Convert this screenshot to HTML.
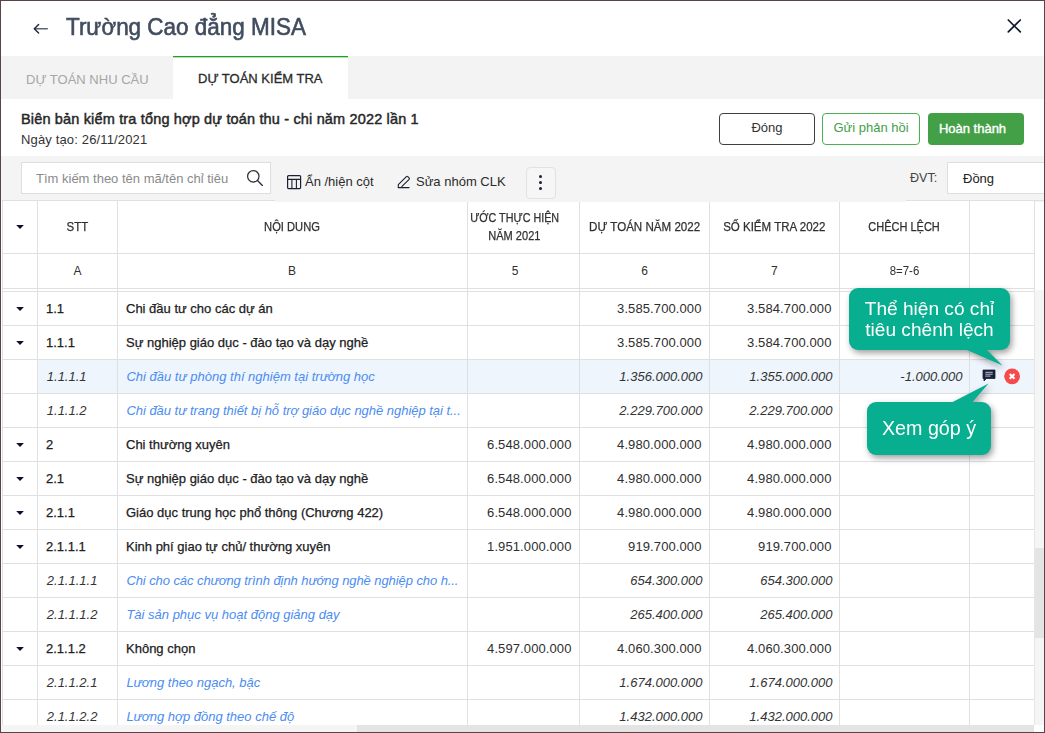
<!DOCTYPE html><html><head><meta charset="utf-8"><style>
*{box-sizing:border-box;margin:0;padding:0}
html,body{width:1045px;height:733px;overflow:hidden;background:#fff}
body{position:relative;font-family:"Liberation Sans",sans-serif;color:#212121}
.a{position:absolute}
.frame{left:0;top:0;width:1045px;height:733px;border:1px solid #5a4546;z-index:50;pointer-events:none}
.title{left:66px;top:14px;font-size:23.6px;color:#404c5f;white-space:nowrap;-webkit-text-stroke:0.6px #404c5f;transform-origin:0 0;transform:scaleX(0.952)}
.tabs{left:1px;top:56px;width:1043px;height:43px;background:#f3f3f3}
.tab1{left:26px;top:71.5px;font-size:13px;color:#a6a6a6;white-space:nowrap}
.tab2{left:173px;top:56px;width:175px;height:43px;background:#fff;border-top:1px solid #1ea21e;box-shadow:inset 0 0.5px 0 #6cc46c}
.tab2 span{position:absolute;left:25px;top:13.5px;font-size:13px;color:#2a2a2a;white-space:nowrap;-webkit-text-stroke:0.3px #2a2a2a}
.h1{left:21px;top:110.5px;font-size:14.5px;color:#262626;white-space:nowrap;letter-spacing:0.16px;-webkit-text-stroke:0.45px #262626}
.h2{left:21px;top:132px;font-size:13px;color:#333;white-space:nowrap;letter-spacing:0.15px}
.btn{top:113px;height:32px;border-radius:4px;font-size:13px;display:flex;align-items:center;justify-content:center;white-space:nowrap;padding-bottom:3px}
.b1{left:719px;width:96px;border:1px solid #3f3f3f;color:#333}
.b2{left:822px;width:98px;border:1px solid #4caf50;color:#43a047}
.b3{left:928px;width:96px;background:#43a047;color:#fff;font-size:13px;-webkit-text-stroke:0.4px #fff;padding-right:7px;padding-bottom:2px}
.tool{left:1px;top:156px;width:1043px;height:46px;background:#f4f4f4}
.search{left:21px;top:162px;width:250px;height:32px;background:#fff;border:1px solid #dedede}
.search span{position:absolute;left:14px;top:8px;font-size:13px;color:#8a8a8a;white-space:nowrap}
.t1{left:305px;top:174px;font-size:13px;color:#2b2b2b;white-space:nowrap}
.t2{left:416px;top:174px;font-size:13px;color:#2b2b2b;white-space:nowrap}
.kebab{left:526px;top:167px;width:30px;height:32px;border:1px solid #e2e2e2;border-radius:4px;background:#f6f6f6}
.dvt{left:910px;top:171px;font-size:12.6px;color:#444;white-space:nowrap}
.sel{left:947px;top:162px;width:100px;height:32px;background:#fff;border:1px solid #dedede}
.sel span{position:absolute;left:15px;top:8px;font-size:13px;color:#222;white-space:nowrap}
.grid{left:2px;top:200px;width:1033px;height:533px;background:#fff}
.hl{background:#fff;}
.vl{position:absolute;top:0;width:1px;background:#e0e0e0}
.hline{position:absolute;height:1px;background:#e0e0e0}
.th{position:absolute;font-size:11.6px;color:#333;text-align:center;display:flex;align-items:center;justify-content:center;line-height:18px;-webkit-text-stroke:0.2px #333}
.cell{position:absolute;font-size:13px;white-space:nowrap;display:flex;align-items:center;height:33px}
.b{color:#212121;-webkit-text-stroke:0.25px #212121}
.i{font-style:italic;color:#333}
.nb{color:#2e2e2e;letter-spacing:0.1px}
.blue{font-style:italic;color:#4a8cf2}
.num{justify-content:flex-end}
.tri{position:absolute;width:0;height:0;border-left:4px solid transparent;border-right:4px solid transparent;border-top:5px solid #1b1f33}
.hscroll{left:1px;top:725px;width:1033px;height:7px;background:#f5f5f5}
.hthumb{left:357px;top:725px;width:677px;height:7px;background:#e4e4e4}
.vscroll{left:1034px;top:290px;width:10px;height:435px;background:#f5f5f5;border-left:1px solid #e6e6e6}
.vthumb{left:1035px;top:548px;width:9px;height:90px;background:#e4e4e4}
.corner{left:1034px;top:725px;width:10px;height:7px;background:#fff}
.callout{position:absolute;background:#07ae90;color:#fff;border-radius:9px;text-align:center;white-space:nowrap}
</style></head><body>
<svg class="a" style="left:30px;top:20px" width="20" height="18" viewBox="0 0 20 18"><path d="M4.5 8.8H17.3" stroke="#5d6478" stroke-width="1.4" fill="none" stroke-linecap="round"/><path d="M8.6 4.6L4.3 8.8L8.6 13.1" stroke="#1d2540" stroke-width="1.4" fill="none" stroke-linecap="round" stroke-linejoin="round"/></svg>
<div class="a title">Trường Cao đẳng MISA</div>
<svg class="a" style="left:1005px;top:17px" width="18" height="18" viewBox="0 0 18 18"><path d="M3.3 3L15.3 14.9M15.3 3L3.3 14.9" stroke="#101633" stroke-width="1.7" fill="none" stroke-linecap="round"/></svg>
<div class="a tabs"></div>
<div class="a tab1">DỰ TOÁN NHU CẦU</div>
<div class="a tab2"><span>DỰ TOÁN KIỂM TRA</span></div>
<div class="a h1">Biên bản kiểm tra tổng hợp dự toán thu - chi năm 2022 lần 1</div>
<div class="a h2">Ngày tạo: 26/11/2021</div>
<div class="a btn b1">Đóng</div>
<div class="a btn b2">Gửi phản hồi</div>
<div class="a btn b3">Hoàn thành</div>
<div class="a tool"></div>
<div class="a search"><span>Tìm kiếm theo tên mã/tên chỉ tiêu</span></div>
<svg class="a" style="left:245px;top:168px" width="20" height="20" viewBox="0 0 20 20"><circle cx="8.3" cy="8.3" r="5.7" stroke="#2b2f3a" stroke-width="1.25" fill="none"/><path d="M12.5 12.5L17.4 17.4" stroke="#2b2f3a" stroke-width="1.35" stroke-linecap="round"/></svg>
<svg class="a" style="left:286px;top:174px" width="16" height="16" viewBox="0 0 16 16"><rect x="1.6" y="1.6" width="13" height="13" rx="1" stroke="#1b1f33" stroke-width="1.2" fill="none"/><path d="M1.6 5.4H14.6M5.9 5.4V14.6M10.4 5.4V14.6" stroke="#1b1f33" stroke-width="1.1"/></svg>
<div class="a t1">Ẩn /hiện cột</div>
<svg class="a" style="left:393px;top:172px" width="22" height="20" viewBox="0 0 22 20"><path d="M5.3 15.5V12.7L13.4 4.6Q14.1 3.9 14.8 4.6L16.1 5.9Q16.8 6.6 16.1 7.3L8.5 14.9" stroke="#1b1f33" stroke-width="1.1" fill="none" stroke-linejoin="round"/><path d="M5.3 15.6H16" stroke="#1b1f33" stroke-width="1.2" stroke-linecap="round"/></svg>
<div class="a t2">Sửa nhóm CLK</div>
<div class="a kebab"></div>
<div class="a" style="left:538.6px;top:175.0px;width:3.2px;height:3.2px;border-radius:50%;background:#1b1f33"></div>
<div class="a" style="left:538.6px;top:180.6px;width:3.2px;height:3.2px;border-radius:50%;background:#1b1f33"></div>
<div class="a" style="left:538.6px;top:187.0px;width:3.2px;height:3.2px;border-radius:50%;background:#1b1f33"></div>
<div class="a dvt">ĐVT:</div>
<div class="a sel"><span>Đồng</span></div>
<div class="a grid"></div>
<div class="a hline" style="left:2px;top:200px;width:273px"></div>
<div class="a hline" style="left:906px;top:200px;width:138px"></div>
<div class="a hline" style="left:2px;top:253px;width:1032px"></div>
<div class="a hline" style="left:2px;top:288px;width:1032px"></div>
<div class="a hline" style="left:2px;top:291px;width:1032px"></div>
<div class="a hline" style="left:2px;top:325px;width:1032px"></div>
<div class="a hline" style="left:2px;top:359px;width:1032px"></div>
<div class="a hline" style="left:2px;top:393px;width:1032px"></div>
<div class="a hline" style="left:2px;top:427px;width:1032px"></div>
<div class="a hline" style="left:2px;top:461px;width:1032px"></div>
<div class="a hline" style="left:2px;top:495px;width:1032px"></div>
<div class="a hline" style="left:2px;top:529px;width:1032px"></div>
<div class="a hline" style="left:2px;top:563px;width:1032px"></div>
<div class="a hline" style="left:2px;top:597px;width:1032px"></div>
<div class="a hline" style="left:2px;top:631px;width:1032px"></div>
<div class="a hline" style="left:2px;top:665px;width:1032px"></div>
<div class="a hline" style="left:2px;top:699px;width:1032px"></div>
<div class="a" style="left:38px;top:360px;width:996px;height:33px;background:#eef5fd"></div>
<div class="a vl" style="left:2px;top:200px;height:525px"></div>
<div class="a vl" style="left:37px;top:200px;height:525px"></div>
<div class="a vl" style="left:117px;top:200px;height:525px"></div>
<div class="a vl" style="left:467px;top:200px;height:525px"></div>
<div class="a vl" style="left:579px;top:200px;height:525px"></div>
<div class="a vl" style="left:709px;top:200px;height:525px"></div>
<div class="a vl" style="left:839px;top:200px;height:525px"></div>
<div class="a vl" style="left:969px;top:200px;height:525px"></div>
<div class="a vl" style="left:1034px;top:200px;height:525px"></div>
<div class="a" style="left:275px;top:200px;width:631px;height:2px;background:#f4f4f4"></div>
<div class="a" style="left:-72.5px;top:216.64px;width:300px;text-align:center;line-height:20px;font-size:12px;white-space:nowrap;color:#303030;-webkit-text-stroke:0.25px #303030"><span style="display:inline-block;transform:scaleX(0.956);">STT</span></div>
<div class="a" style="left:142px;top:216.64px;width:300px;text-align:center;line-height:20px;font-size:12px;white-space:nowrap;color:#303030;-webkit-text-stroke:0.25px #303030"><span style="display:inline-block;transform:scaleX(0.93);">NỘI DUNG</span></div>
<div class="a" style="left:364.5px;top:207.64px;width:300px;text-align:center;line-height:20px;font-size:12px;white-space:nowrap;color:#303030;-webkit-text-stroke:0.25px #303030"><span style="display:inline-block;transform:scaleX(0.896);">ƯỚC THỰC HIỆN</span></div>
<div class="a" style="left:364.5px;top:225.84px;width:300px;text-align:center;line-height:20px;font-size:12px;white-space:nowrap;color:#303030;-webkit-text-stroke:0.25px #303030"><span style="display:inline-block;transform:scaleX(0.92);">NĂM 2021</span></div>
<div class="a" style="left:494.29999999999995px;top:216.64px;width:300px;text-align:center;line-height:20px;font-size:12px;white-space:nowrap;color:#303030;-webkit-text-stroke:0.25px #303030"><span style="display:inline-block;transform:scaleX(0.965);">DỰ TOÁN NĂM 2022</span></div>
<div class="a" style="left:624.5px;top:216.64px;width:300px;text-align:center;line-height:20px;font-size:12px;white-space:nowrap;color:#303030;-webkit-text-stroke:0.25px #303030"><span style="display:inline-block;transform:scaleX(0.96);">SỐ KIỂM TRA 2022</span></div>
<div class="a" style="left:754.3px;top:216.64px;width:300px;text-align:center;line-height:20px;font-size:12px;white-space:nowrap;color:#303030;-webkit-text-stroke:0.25px #303030"><span style="display:inline-block;transform:scaleX(0.917);">CHÊCH LỆCH</span></div>
<div class="a" style="left:-72.5px;top:260.54px;width:300px;text-align:center;line-height:20px;font-size:12px;white-space:nowrap;color:#303030"><span style="display:inline-block;transform:scaleX(1.0);">A</span></div>
<div class="a" style="left:142px;top:260.54px;width:300px;text-align:center;line-height:20px;font-size:12px;white-space:nowrap;color:#303030"><span style="display:inline-block;transform:scaleX(1.0);">B</span></div>
<div class="a" style="left:365px;top:260.54px;width:300px;text-align:center;line-height:20px;font-size:12px;white-space:nowrap;color:#303030"><span style="display:inline-block;transform:scaleX(1.0);">5</span></div>
<div class="a" style="left:494.5px;top:260.54px;width:300px;text-align:center;line-height:20px;font-size:12px;white-space:nowrap;color:#303030"><span style="display:inline-block;transform:scaleX(1.0);">6</span></div>
<div class="a" style="left:624.3px;top:260.54px;width:300px;text-align:center;line-height:20px;font-size:12px;white-space:nowrap;color:#303030"><span style="display:inline-block;transform:scaleX(1.0);">7</span></div>
<div class="a" style="left:754.3px;top:260.54px;width:300px;text-align:center;line-height:20px;font-size:12px;white-space:nowrap;color:#303030"><span style="display:inline-block;transform:scaleX(0.95);">8=7-6</span></div>
<svg class="a" style="left:14px;top:222px" width="12" height="10" viewBox="0 0 12 10"><path d="M2.2 2.9H9.9L6.05 7.1Z" fill="#0b1030"/></svg>
<svg class="a" style="left:14px;top:304px" width="12" height="10" viewBox="0 0 12 10"><path d="M2.2 2.9H9.9L6.05 7.1Z" fill="#0b1030"/></svg>
<div class="cell b" style="left:46px;top:292px">1.1</div>
<div class="cell b" style="left:126px;top:292px;letter-spacing:0">Chi đầu tư cho các dự án</div>
<div class="cell nb num" style="left:549px;width:160px;top:292px;padding-right:7.5px">3.585.700.000</div>
<div class="cell nb num" style="left:679px;width:160px;top:292px;padding-right:7.5px">3.584.700.000</div>
<svg class="a" style="left:14px;top:338px" width="12" height="10" viewBox="0 0 12 10"><path d="M2.2 2.9H9.9L6.05 7.1Z" fill="#0b1030"/></svg>
<div class="cell b" style="left:46px;top:326px">1.1.1</div>
<div class="cell b" style="left:126px;top:326px;letter-spacing:0">Sự nghiệp giáo dục - đào tạo và dạy nghề</div>
<div class="cell nb num" style="left:549px;width:160px;top:326px;padding-right:7.5px">3.585.700.000</div>
<div class="cell nb num" style="left:679px;width:160px;top:326px;padding-right:7.5px">3.584.700.000</div>
<div class="cell i" style="left:46.8px;top:360px">1.1.1.1</div>
<div class="cell blue" style="left:126.4px;top:360px;letter-spacing:0">Chi đầu tư phòng thí nghiệm tại trường học</div>
<div class="cell i num" style="left:549px;width:160px;top:360px;padding-right:6.5px">1.356.000.000</div>
<div class="cell i num" style="left:679px;width:160px;top:360px;padding-right:6.5px">1.355.000.000</div>
<div class="cell i num" style="left:809px;width:160px;top:360px;padding-right:6.5px">-1.000.000</div>
<div class="cell i" style="left:46.8px;top:394px">1.1.1.2</div>
<div class="cell blue" style="left:126.4px;top:394px;letter-spacing:-0.03px">Chi đầu tư trang thiết bị hỗ trợ giáo dục nghề nghiệp tại t...</div>
<div class="cell i num" style="left:549px;width:160px;top:394px;padding-right:6.5px">2.229.700.000</div>
<div class="cell i num" style="left:679px;width:160px;top:394px;padding-right:6.5px">2.229.700.000</div>
<svg class="a" style="left:14px;top:440px" width="12" height="10" viewBox="0 0 12 10"><path d="M2.2 2.9H9.9L6.05 7.1Z" fill="#0b1030"/></svg>
<div class="cell b" style="left:46px;top:428px">2</div>
<div class="cell b" style="left:126px;top:428px;letter-spacing:0">Chi thường xuyên</div>
<div class="cell nb num" style="left:419px;width:160px;top:428px;padding-right:7.5px">6.548.000.000</div>
<div class="cell nb num" style="left:549px;width:160px;top:428px;padding-right:7.5px">4.980.000.000</div>
<div class="cell nb num" style="left:679px;width:160px;top:428px;padding-right:7.5px">4.980.000.000</div>
<svg class="a" style="left:14px;top:474px" width="12" height="10" viewBox="0 0 12 10"><path d="M2.2 2.9H9.9L6.05 7.1Z" fill="#0b1030"/></svg>
<div class="cell b" style="left:46px;top:462px">2.1</div>
<div class="cell b" style="left:126px;top:462px;letter-spacing:0">Sự nghiệp giáo dục - đào tạo và dạy nghề</div>
<div class="cell nb num" style="left:419px;width:160px;top:462px;padding-right:7.5px">6.548.000.000</div>
<div class="cell nb num" style="left:549px;width:160px;top:462px;padding-right:7.5px">4.980.000.000</div>
<div class="cell nb num" style="left:679px;width:160px;top:462px;padding-right:7.5px">4.980.000.000</div>
<svg class="a" style="left:14px;top:508px" width="12" height="10" viewBox="0 0 12 10"><path d="M2.2 2.9H9.9L6.05 7.1Z" fill="#0b1030"/></svg>
<div class="cell b" style="left:46px;top:496px">2.1.1</div>
<div class="cell b" style="left:126px;top:496px;letter-spacing:0">Giáo dục trung học phổ thông (Chương 422)</div>
<div class="cell nb num" style="left:419px;width:160px;top:496px;padding-right:7.5px">6.548.000.000</div>
<div class="cell nb num" style="left:549px;width:160px;top:496px;padding-right:7.5px">4.980.000.000</div>
<div class="cell nb num" style="left:679px;width:160px;top:496px;padding-right:7.5px">4.980.000.000</div>
<svg class="a" style="left:14px;top:542px" width="12" height="10" viewBox="0 0 12 10"><path d="M2.2 2.9H9.9L6.05 7.1Z" fill="#0b1030"/></svg>
<div class="cell b" style="left:46px;top:530px">2.1.1.1</div>
<div class="cell b" style="left:126px;top:530px;letter-spacing:0">Kinh phí giao tự chủ/ thường xuyên</div>
<div class="cell nb num" style="left:419px;width:160px;top:530px;padding-right:7.5px">1.951.000.000</div>
<div class="cell nb num" style="left:549px;width:160px;top:530px;padding-right:7.5px">919.700.000</div>
<div class="cell nb num" style="left:679px;width:160px;top:530px;padding-right:7.5px">919.700.000</div>
<div class="cell i" style="left:46.8px;top:564px">2.1.1.1.1</div>
<div class="cell blue" style="left:126.4px;top:564px;letter-spacing:-0.08px">Chi cho các chương trình định hướng nghề nghiệp cho h...</div>
<div class="cell i num" style="left:549px;width:160px;top:564px;padding-right:6.5px">654.300.000</div>
<div class="cell i num" style="left:679px;width:160px;top:564px;padding-right:6.5px">654.300.000</div>
<div class="cell i" style="left:46.8px;top:598px">2.1.1.1.2</div>
<div class="cell blue" style="left:126.4px;top:598px;letter-spacing:0">Tài sản phục vụ hoạt động giảng dạy</div>
<div class="cell i num" style="left:549px;width:160px;top:598px;padding-right:6.5px">265.400.000</div>
<div class="cell i num" style="left:679px;width:160px;top:598px;padding-right:6.5px">265.400.000</div>
<svg class="a" style="left:14px;top:644px" width="12" height="10" viewBox="0 0 12 10"><path d="M2.2 2.9H9.9L6.05 7.1Z" fill="#0b1030"/></svg>
<div class="cell b" style="left:46px;top:632px">2.1.1.2</div>
<div class="cell b" style="left:126px;top:632px;letter-spacing:0">Không chọn</div>
<div class="cell nb num" style="left:419px;width:160px;top:632px;padding-right:7.5px">4.597.000.000</div>
<div class="cell nb num" style="left:549px;width:160px;top:632px;padding-right:7.5px">4.060.300.000</div>
<div class="cell nb num" style="left:679px;width:160px;top:632px;padding-right:7.5px">4.060.300.000</div>
<div class="cell i" style="left:46.8px;top:666px">2.1.1.2.1</div>
<div class="cell blue" style="left:126.4px;top:666px;letter-spacing:0">Lương theo ngạch, bậc</div>
<div class="cell i num" style="left:549px;width:160px;top:666px;padding-right:6.5px">1.674.000.000</div>
<div class="cell i num" style="left:679px;width:160px;top:666px;padding-right:6.5px">1.674.000.000</div>
<div class="cell i" style="left:46.8px;top:700px">2.1.1.2.2</div>
<div class="cell blue" style="left:126.4px;top:700px;letter-spacing:0">Lương hợp đồng theo chế độ</div>
<div class="cell i num" style="left:549px;width:160px;top:700px;padding-right:6.5px">1.432.000.000</div>
<div class="cell i num" style="left:679px;width:160px;top:700px;padding-right:6.5px">1.432.000.000</div>
<svg class="a" style="left:982px;top:369.3px" width="14" height="13" viewBox="0 0 14 13"><path d="M1 1H13V9.5H4.5L2 12V9.5H1Z" fill="#1b2238" stroke="#1b2238" stroke-width="0.8" stroke-linejoin="round"/><path d="M3.3 3.3H10.7M3.3 5.2H10.7M3.3 7.1H8.5" stroke="#c9ced8" stroke-width="0.9"/></svg>
<svg class="a" style="left:1004px;top:367.5px" width="17" height="17" viewBox="0 0 17 17"><circle cx="8.1" cy="8.3" r="7.9" fill="#f64a4d"/><path d="M5.7 5.9L10.5 10.7M10.5 5.9L5.7 10.7" stroke="#fff" stroke-width="2.1"/></svg>
<div class="a hscroll"></div>
<div class="a hthumb"></div>
<div class="a vscroll"></div>
<div class="a vthumb"></div>
<div class="a corner"></div>
<div class="a" style="left:0;top:0;width:1045px;height:733px;filter:drop-shadow(2px 3px 3px rgba(0,0,0,0.38));z-index:6">
<div class="callout" style="left:849px;top:288px;width:161px;height:62px;font-size:19.1px;line-height:21px;padding-top:10px">Thể hiện có chỉ<br>tiêu chênh lệch</div>
<svg class="a" style="left:950px;top:340px" width="60" height="30" viewBox="0 0 60 30"><path d="M3.3 4L31 4L52.5 25.5Z" fill="#07ae90"/></svg>
</div>
<div class="a" style="left:0;top:0;width:1045px;height:733px;filter:drop-shadow(2px 3px 3px rgba(0,0,0,0.38));z-index:6">
<div class="callout" style="left:867px;top:402px;width:124px;height:53px;font-size:19.7px;line-height:22px;padding-top:14.5px">Xem góp ý</div>
<svg class="a" style="left:940px;top:380px" width="60" height="30" viewBox="0 0 60 30"><path d="M48.6 3.5L6.8 25L29.9 25Z" fill="#07ae90"/></svg>
</div>
<div class="a frame"></div>
</body></html>
